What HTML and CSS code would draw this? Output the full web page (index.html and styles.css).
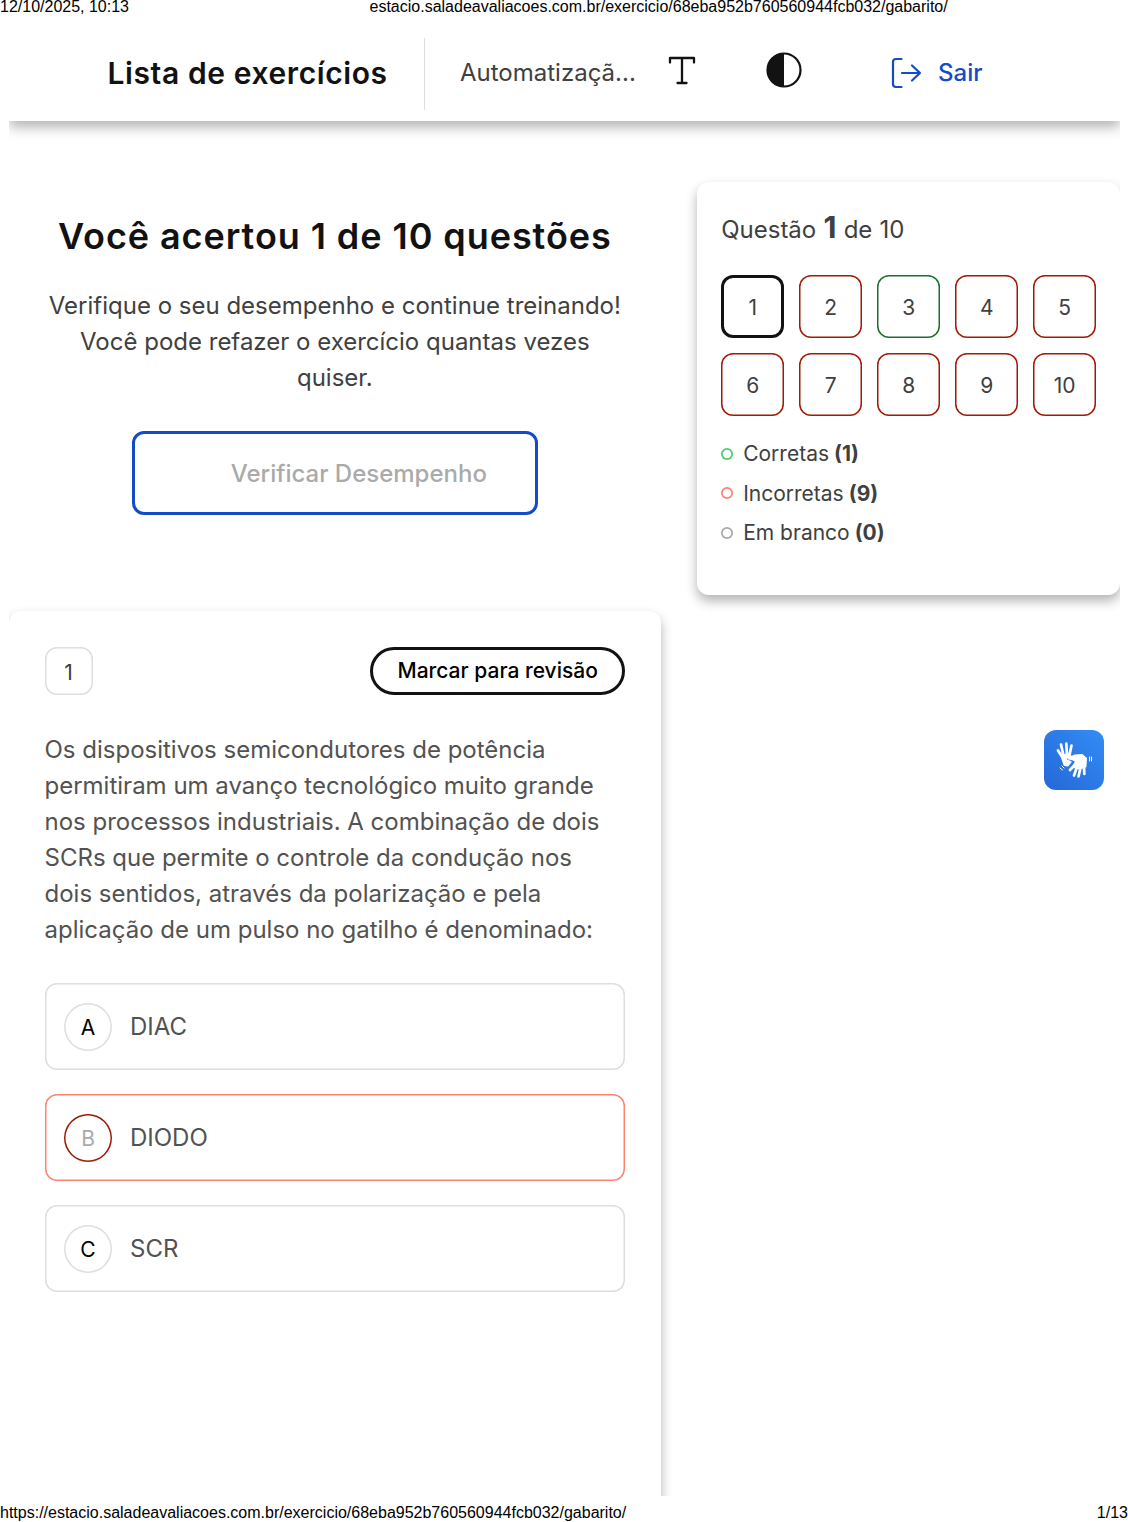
FILE: index.html
```html
<!DOCTYPE html>
<html lang="pt-BR">
  <head>
    <meta charset="UTF-8" />
    <title>Lista de exercícios</title>
    <link rel="stylesheet" href="styles.css">
  </head>
  <body>
    <div class="print-line">
      <span class="print-date">12/10/2025, 10:13</span>
      <span>estacio.saladeavaliacoes.com.br/exercicio/68eba952b760560944fcb032/gabarito/</span>
    </div>

    <div class="page">
      <header class="header">
        <h1 class="title">Lista de exercícios</h1>
        <div class="course">Automatizaçã...</div>
        <svg class="icon-text" width="28" height="30" viewBox="0 0 28 30" fill="none" stroke="#121212" stroke-width="2.300" stroke-linecap="round" stroke-linejoin="round">
          <path d="M2 6.500V2h24v4.500M14 2v25M9.500 27h9" />
        </svg>
        <svg class="icon-contrast" width="36" height="36" viewBox="0 0 36 36">
          <circle cx="18" cy="18" r="16.500" fill="none" stroke="#121212" stroke-width="2.200" />
          <path d="M18 1a17 17 0 0 0 0 34z" fill="#121212" />
        </svg>
        <a class="exit">
          <svg width="32" height="32" viewBox="0 0 32 32" fill="none" stroke="#144bc8" stroke-width="2.200" stroke-linecap="round" stroke-linejoin="round">
            <path d="M10.500 2H5Q2 2 2 5v22q0 3 3 3h5.500M11 16h18M21 8.500l8 7.500-8 7.500" />
          </svg>
          <span>Sair</span>
        </a>
      </header>

      <main class="content">
        <div class="left">
          <section class="result">
            <h2>Você acertou 1 de 10 questões</h2>
            <p>Verifique o seu desempenho e continue treinando! Você pode refazer o exercício quantas vezes quiser.</p>
            <button class="check-btn">Verificar Desempenho</button>
          </section>

          <section class="question card">
            <div class="question-top">
              <span class="number">1</span>
              <button class="review-btn">Marcar para revisão</button>
            </div>
            <p class="statement">Os dispositivos semicondutores de potência permitiram um avanço tecnológico muito grande nos processos industriais. A combinação de dois SCRs que permite o controle da condução nos dois sentidos, através da polarização e pela aplicação de um pulso no gatilho é denominado:</p>
            <div class="options">
              <div class="option"><span class="letter">A</span><span>DIAC</span></div>
              <div class="option wrong"><span class="letter">B</span><span>DIODO</span></div>
              <div class="option"><span class="letter">C</span><span>SCR</span></div>
            </div>
          </section>
        </div>

        <aside class="summary card">
          <div class="counter">Questão <b>1</b> de 10</div>
          <div class="grid">
            <span class="cell current">1</span>
            <span class="cell">2</span>
            <span class="cell right">3</span>
            <span class="cell">4</span>
            <span class="cell">5</span>
            <span class="cell">6</span>
            <span class="cell">7</span>
            <span class="cell">8</span>
            <span class="cell">9</span>
            <span class="cell">10</span>
          </div>
          <ul class="legend">
            <li class="ok">Corretas <b>(1)</b></li>
            <li class="bad">Incorretas <b>(9)</b></li>
            <li class="blank">Em branco <b>(0)</b></li>
          </ul>
        </aside>
      </main>

      <!-- sign language widget -->
      <div class="libras">
        <svg width="60" height="60" viewBox="0 0 60 60" fill="none" stroke="#fff" stroke-linecap="round" stroke-linejoin="round">
          <path d="M17.500 26l8-2.500 1 2.500-4 1.500-.500 2.500 4.500 2-3 3.500-3-.500z" fill="#fff" stroke-width="2" />
          <path d="M18.500 27.500l-4.500-7M19.500 25.500l-2.500-11M23 25l-.700-11.500M25.500 25l2-9.500" stroke-width="2.700" />
          <path d="M24.500 28.500l6.500-3 7-.500 4 3.500-.500 8-6 2-6-1.500 2.500-6q-3-2-7.500-2.500z" fill="#fff" stroke-width="2" />
          <path d="M31 34.500l-5 5.500M33 37l-3 8.500M36.500 38l-2 8.500M40 36.500l.300 7.500" stroke-width="2.700" />
          <path d="M16 38l2.500 2M18 36l2 2M45.500 27v4M47.500 27v4" stroke-width="1" />
        </svg>
      </div>
    </div>

    <div class="print-line bottom">
      <span>https://estacio.saladeavaliacoes.com.br/exercicio/68eba952b760560944fcb032/gabarito/</span>
      <span>1/13</span>
    </div>
  </body>
</html>
```
FILE: styles.css
```css
* {
  box-sizing: border-box;
}
body {
  margin: 0;
  background-color: #fff;
  font-family: Inter, "Liberation Sans", sans-serif;
  color: #404040;
}
h1,
h2,
p,
ul {
  margin: 0;
  padding: 0;
}
button {
  background: none;
  font-family: inherit;
}
.print-line {
  display: flex;
  height: 26px;
  padding-top: 1px;
  font: 16px/12px "Liberation Sans", Arial, sans-serif;
  color: #000;
}
.print-date {
  width: 369.5px;
}
.print-line.bottom {
  justify-content: space-between;
  padding-top: 11px;
}
.page {
  position: relative;
  height: 1470px;
  margin: 0 8px 0 8.5px;
  overflow: hidden;
}
.header {
  display: flex;
  align-items: center;
  height: 95px;
  padding-left: 99px;
  box-shadow: 0 6px 12px rgba(0, 0, 0, 0.3);
}
.title {
  width: 316px;
  margin-top: -2px;
  font-size: 30px;
  font-weight: 600;
  letter-spacing: 0.6px;
  white-space: nowrap;
  color: #121212;
}
.course {
  width: 244.5px;
  height: 72px;
  padding-left: 35.5px;
  border-left: 1px solid #dedede;
  font-size: 24px;
  line-height: 70px;
}
.icon-text {
  margin-top: -5px;
}
.icon-contrast {
  margin: -7px 0 0 70px;
}
.exit {
  display: flex;
  align-items: center;
  gap: 15px;
  margin: -2px 0 0 89px;
  font-size: 24px;
  font-weight: 500;
  color: #144bc8;
}
.content {
  display: flex;
  align-items: flex-start;
  gap: 36px;
  padding-top: 61px;
}
.card {
  background-color: #fff;
  border-radius: 12px;
  box-shadow: 0 6px 12px rgba(0, 0, 0, 0.3);
}
.left {
  flex: none;
  width: 652.7px;
}
.result {
  display: flex;
  flex-direction: column;
  align-items: center;
  height: 429px;
  padding: 30px 36px 0;
  text-align: center;
}
.result h2 {
  font-size: 36px;
  line-height: 48px;
  font-weight: 600;
  letter-spacing: 0.93px;
  white-space: nowrap;
  color: #121212;
}
.result p {
  margin-top: 28px;
  font-size: 24px;
  line-height: 36px;
}
.check-btn {
  width: 406px;
  height: 84px;
  margin-top: 35px;
  padding: 0 0 0 48px;
  border: 3px solid #144bc8;
  border-radius: 12px;
  font-size: 24px;
  font-weight: 500;
  color: #aaa;
}
.question {
  height: 1000px;
  padding: 36px;
}
.question-top {
  display: flex;
  justify-content: space-between;
}
.number {
  width: 48px;
  height: 48px;
  border-radius: 12px;
  box-shadow: inset 0 0 0 1.5px #dedede;
  font-size: 21px;
  line-height: 51px;
  text-align: center;
}
.review-btn {
  width: 255px;
  height: 48px;
  padding: 0 0 1px;
  border: 3px solid #121212;
  border-radius: 24px;
  font-size: 21px;
  font-weight: 500;
  color: #000;
}
.statement {
  margin-top: 37px;
  font-size: 24px;
  line-height: 36px;
  color: #525252;
}
.options {
  display: flex;
  flex-direction: column;
  gap: 24px;
  margin-top: 35px;
}
.option {
  display: flex;
  align-items: center;
  gap: 18px;
  height: 87px;
  padding-left: 19.5px;
  border-radius: 12px;
  box-shadow: inset 0 0 0 1.5px #dedede;
  font-size: 24px;
  color: #525252;
}
.letter {
  width: 48px;
  height: 48px;
  border-radius: 50%;
  box-shadow: inset 0 0 0 1.5px #dedede;
  font-size: 21px;
  line-height: 49px;
  text-align: center;
  color: #000;
}
.option.wrong {
  box-shadow: inset 0 0 0 1.5px #ff8470;
}
.wrong .letter {
  box-shadow: inset 0 0 0 1.5px #9e1b05;
  color: #aaa;
}
.summary {
  flex: none;
  width: 423px;
  height: 413px;
  padding: 28px 24px;
}
.counter {
  height: 36px;
  font-size: 24px;
  line-height: 34px;
  word-spacing: 0.5px;
}
.counter b {
  font-size: 30px;
}
.grid {
  display: grid;
  grid-template-columns: repeat(5, 63px);
  gap: 15px;
  margin-top: 29px;
}
.cell {
  display: flex;
  align-items: center;
  justify-content: center;
  height: 63px;
  padding-top: 2px;
  border-radius: 12px;
  box-shadow: inset 0 0 0 1.5px #9e1b05;
  font-size: 21px;
}
.cell.current {
  box-shadow: inset 0 0 0 3px #121212;
}
.cell.right {
  box-shadow: inset 0 0 0 1.5px #1b6e30;
}
.legend {
  margin-top: 18px;
  list-style: none;
  font-size: 21px;
  line-height: 39.5px;
}
.legend li {
  display: flex;
  align-items: center;
  gap: 5px;
}
.legend li::before {
  content: "";
  box-sizing: border-box;
  width: 12px;
  height: 12px;
  margin-right: 5px;
  border-radius: 50%;
  box-shadow: inset 0 0 0 1.7px #4dcb70;
}
.legend .bad::before {
  box-shadow: inset 0 0 0 1.7px #ff8470;
}
.legend .blank::before {
  box-shadow: inset 0 0 0 1.7px #aaa;
}
/* floats over the page */
.libras {
  position: absolute;
  top: 704px;
  right: 16px;
  width: 60px;
  height: 60px;
  border-radius: 12px;
  background: linear-gradient(45deg, #2468d8, #348cf5);
}
```
